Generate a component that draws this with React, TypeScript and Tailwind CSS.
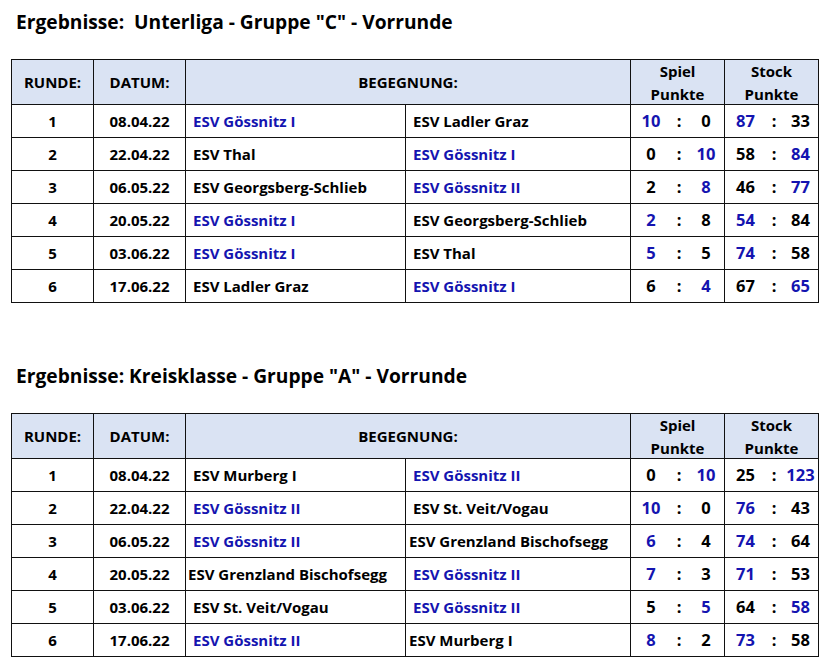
type Side = "h" | "a";

type Row = {
  runde: number;
  datum: string;
  home: string;
  away: string;
  teamBlue: Side;
  spiel: [string, string];
  stock: [string, string];
  scoreBlue: Side;
  homeTight?: boolean;
  awayTight?: boolean;
};

const unterliga: Row[] = [
  { runde: 1, datum: "08.04.22", home: "ESV Gössnitz I", away: "ESV Ladler Graz", teamBlue: "h", spiel: ["10", "0"], stock: ["87", "33"], scoreBlue: "h" },
  { runde: 2, datum: "22.04.22", home: "ESV Thal", away: "ESV Gössnitz I", teamBlue: "a", spiel: ["0", "10"], stock: ["58", "84"], scoreBlue: "a" },
  { runde: 3, datum: "06.05.22", home: "ESV Georgsberg-Schlieb", away: "ESV Gössnitz II", teamBlue: "a", spiel: ["2", "8"], stock: ["46", "77"], scoreBlue: "a" },
  { runde: 4, datum: "20.05.22", home: "ESV Gössnitz I", away: "ESV Georgsberg-Schlieb", teamBlue: "h", spiel: ["2", "8"], stock: ["54", "84"], scoreBlue: "h" },
  { runde: 5, datum: "03.06.22", home: "ESV Gössnitz I", away: "ESV Thal", teamBlue: "h", spiel: ["5", "5"], stock: ["74", "58"], scoreBlue: "h" },
  { runde: 6, datum: "17.06.22", home: "ESV Ladler Graz", away: "ESV Gössnitz I", teamBlue: "a", spiel: ["6", "4"], stock: ["67", "65"], scoreBlue: "a" },
];

const kreisklasse: Row[] = [
  { runde: 1, datum: "08.04.22", home: "ESV Murberg I", away: "ESV Gössnitz II", teamBlue: "a", spiel: ["0", "10"], stock: ["25", "123"], scoreBlue: "a" },
  { runde: 2, datum: "22.04.22", home: "ESV Gössnitz II", away: "ESV St. Veit/Vogau", teamBlue: "h", spiel: ["10", "0"], stock: ["76", "43"], scoreBlue: "h" },
  { runde: 3, datum: "06.05.22", home: "ESV Gössnitz II", away: "ESV Grenzland Bischofsegg", teamBlue: "h", spiel: ["6", "4"], stock: ["74", "64"], scoreBlue: "h", awayTight: true },
  { runde: 4, datum: "20.05.22", home: "ESV Grenzland Bischofsegg", away: "ESV Gössnitz II", teamBlue: "a", spiel: ["7", "3"], stock: ["71", "53"], scoreBlue: "h", homeTight: true },
  { runde: 5, datum: "03.06.22", home: "ESV St. Veit/Vogau", away: "ESV Gössnitz II", teamBlue: "a", spiel: ["5", "5"], stock: ["64", "58"], scoreBlue: "a" },
  { runde: 6, datum: "17.06.22", home: "ESV Gössnitz II", away: "ESV Murberg I", teamBlue: "h", spiel: ["8", "2"], stock: ["73", "58"], scoreBlue: "h", awayTight: true },
];

function tone(blue: boolean) {
  return blue ? "text-[#1414b0]" : "text-black";
}

function Score({ pair, blue, wide }: { pair: [string, string]; blue: Side; wide?: boolean }) {
  return (
    <div className={wide ? "grid grid-cols-[41px_16px_37px]" : "grid grid-cols-[40px_16px_38px]"}>
      <span className={`text-center ${tone(blue === "h")}`}>{pair[0]}</span>
      <span className="text-center">:</span>
      <span className={`text-center ${tone(blue === "a")}`}>{pair[1]}</span>
    </div>
  );
}

function ResultTable({ title, rows }: { title: string; rows: Row[] }) {
  return (
    <section>
      <h2 className="pl-[16px] text-[19.2px] font-bold leading-[28px] whitespace-pre text-black">{title}</h2>
      <table className="mt-[23px] ml-[11px] w-[807px] table-fixed border-collapse text-[15px] font-bold text-black">
        <colgroup>
          <col className="w-[82px]" />
          <col className="w-[92px]" />
          <col className="w-[220px]" />
          <col className="w-[225px]" />
          <col className="w-[94px]" />
          <col className="w-[94px]" />
        </colgroup>
        <thead>
          <tr className="h-[45px] bg-[#dae3f3]">
            <th className="border border-[#111] p-0 text-center font-bold">RUNDE:</th>
            <th className="border border-[#111] p-0 text-center font-bold">DATUM:</th>
            <th colSpan={2} className="border border-[#111] p-0 text-center font-bold">BEGEGNUNG:</th>
            <th className="border border-[#111] p-0 text-center font-bold">
              <span className="block leading-[20px]">Spiel</span>
              <span className="block pt-[3px] leading-[20px]">Punkte</span>
            </th>
            <th className="border border-[#111] p-0 text-center font-bold">
              <span className="block leading-[20px]">Stock</span>
              <span className="block pt-[3px] leading-[20px]">Punkte</span>
            </th>
          </tr>
        </thead>
        <tbody>
          {rows.map((r) => (
            <tr key={r.runde} className="h-[33px]">
              <td className="border border-[#111] p-0 text-center">{r.runde}</td>
              <td className="border border-[#111] p-0 text-center">{r.datum}</td>
              <td className={`border border-[#111] p-0 whitespace-nowrap ${r.homeTight ? "pl-[2px]" : "pl-[7px]"} ${tone(r.teamBlue === "h")}`}>
                {r.home}
              </td>
              <td className={`border border-[#111] p-0 whitespace-nowrap ${r.awayTight ? "pl-[3px]" : "pl-[7px]"} ${tone(r.teamBlue === "a")}`}>
                {r.away}
              </td>
              <td className="border border-[#111] p-0 text-[16.5px] leading-[24px]">
                <Score pair={r.spiel} blue={r.scoreBlue} />
              </td>
              <td className="border border-[#111] p-0 text-[16.5px] leading-[24px]">
                <Score pair={r.stock} blue={r.scoreBlue} wide />
              </td>
            </tr>
          ))}
        </tbody>
      </table>
    </section>
  );
}

export default function App() {
  return (
    <main className="min-h-screen bg-white pt-[8px] font-['Open_Sans',sans-serif]">
      <ResultTable title={'Ergebnisse:  Unterliga - Gruppe "C" - Vorrunde'} rows={unterliga} />
      <div className="h-[59px]" />
      <ResultTable title={'Ergebnisse: Kreisklasse - Gruppe "A" - Vorrunde'} rows={kreisklasse} />
    </main>
  );
}
